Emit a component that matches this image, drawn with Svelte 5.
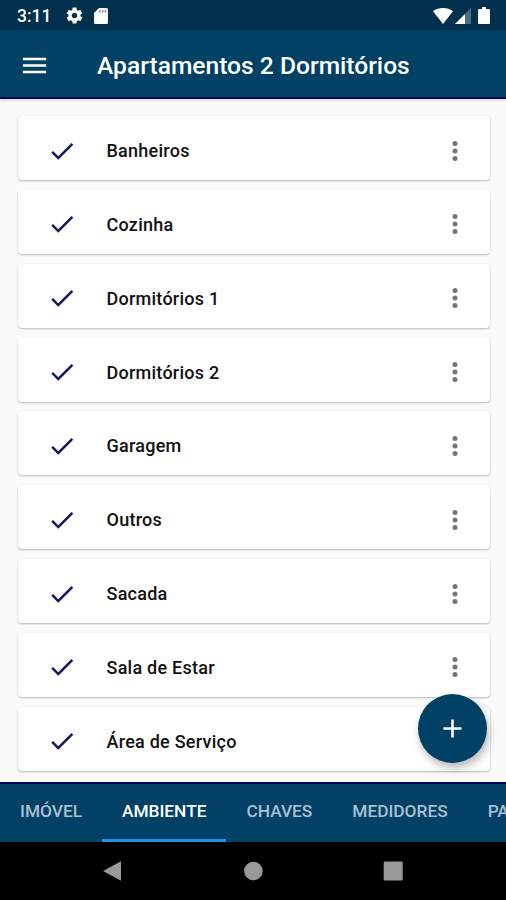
<script>
  let rooms = [
    "Banheiros",
    "Cozinha",
    "Dormitórios 1",
    "Dormitórios 2",
    "Garagem",
    "Outros",
    "Sacada",
    "Sala de Estar",
    "Área de Serviço",
  ];

  let tabs = ["IMÓVEL", "AMBIENTE", "CHAVES", "MEDIDORES", "PA"];
  let activeTab = "AMBIENTE";
</script>

<div class="screen">
  <div class="status-bar">
    <span class="clock">3:11</span>
    <svg class="gear" viewBox="0 0 24 24">
      <path
        d="M19.43 12.98c.04-.32.07-.64.07-.98s-.03-.66-.07-.98l2.11-1.65c.19-.15.24-.42.12-.64l-2-3.46c-.12-.22-.39-.3-.61-.22l-2.49 1c-.52-.4-1.08-.73-1.69-.98l-.38-2.65C14.46 2.18 14.25 2 14 2h-4c-.25 0-.46.18-.49.42l-.38 2.65c-.61.25-1.17.59-1.69.98l-2.49-1c-.23-.09-.49 0-.61.22l-2 3.46c-.13.22-.07.49.12.64l2.11 1.65c-.04.32-.07.65-.07.98s.03.66.07.98l-2.11 1.65c-.19.15-.24.42-.12.64l2 3.46c.12.22.39.3.61.22l2.49-1c.52.4 1.08.73 1.69.98l.38 2.65c.03.24.24.42.49.42h4c.25 0 .46-.18.49-.42l.38-2.65c.61-.25 1.17-.59 1.69-.98l2.49 1c.23.09.49 0 .61-.22l2-3.46c.12-.22.07-.49-.12-.64l-2.11-1.65zM12 15.5c-1.93 0-3.5-1.57-3.5-3.5s1.57-3.5 3.5-3.5 3.5 1.57 3.5 3.5-1.57 3.5-3.5 3.5z"
      />
    </svg>
    <svg class="sd" viewBox="0 0 14 16">
      <path
        d="M5 0h7.5Q14 0 14 1.5v13q0 1.5-1.5 1.5h-11Q0 16 0 14.5V5z"
      />
      <path class="slots" d="M5.3 2h1.3v2.500H5.300zM8 2h1.300v2.500H8zM10.700 2H12v2.500h-1.300z" />
    </svg>
    <span class="spacer"></span>
    <svg class="wifi" viewBox="0 0 20 16">
      <path d="M10 16 0 3.200Q4.300 0 10 0t10 3.200z" />
    </svg>
    <svg class="signal" viewBox="0 0 16 16">
      <path class="dim" d="M16 0v16H0z" />
      <path d="M10 6v10H0z" />
    </svg>
    <svg class="battery" viewBox="0 0 12 17">
      <path
        d="M4 0h4v2h2.700Q12 2 12 3.300v12.400q0 1.300-1.300 1.300H1.300Q0 17 0 15.700V3.300Q0 2 1.300 2H4z"
      />
    </svg>
  </div>

  <header class="app-bar">
    <button class="icon-btn" aria-label="Menu">
      <svg viewBox="0 0 24 24">
        <path d="M3 18h18v-2H3v2zm0-5h18v-2H3v2zm0-7v2h18V6H3z" />
      </svg>
    </button>
    <h1>Apartamentos 2 Dormitórios</h1>
  </header>

  <main>
    {#each rooms as room}
      <div class="card">
        <svg class="check" viewBox="0 0 24 24">
          <path d="M9 16.170 4.830 12l-1.420 1.410L9 19 21 7l-1.410-1.410z" />
        </svg>
        <span class="name">{room}</span>
        <button class="icon-btn more" aria-label="Mais opções">
          <svg viewBox="0 0 24 24">
            <circle cx="12" cy="6" r="2" />
            <circle cx="12" cy="12" r="2" />
            <circle cx="12" cy="18" r="2" />
          </svg>
        </button>
      </div>
    {/each}

    <button class="fab" aria-label="Adicionar">
      <svg viewBox="0 0 24 24">
        <path d="M19 13h-6v6h-2v-6H5v-2h6V5h2v6h6v2z" />
      </svg>
    </button>
  </main>

  <nav class="tabs">
    {#each tabs as tab}
      <button
        class="tab"
        class:active={tab === activeTab}
        on:click={() => (activeTab = tab)}>{tab}</button
      >
    {/each}
  </nav>

  <div class="system-nav">
    <svg viewBox="0 0 20 20"><path d="M0 10 18 0.300v19.400z" /></svg>
    <svg viewBox="0 0 20 20"><circle cx="10.400" cy="10" r="9.300" /></svg>
    <svg viewBox="0 0 20 20">
      <rect x="0.700" y="0.500" width="19" height="19" rx="1.300" />
    </svg>
  </div>
</div>

<style>
  :global(body) {
    margin: 0;
    background: #000;
  }

  .screen {
    width: 506px;
    height: 900px;
    display: flex;
    flex-direction: column;
    overflow: hidden;
    background: #fafafa;
    font-family: Roboto, "Liberation Sans", sans-serif;
  }

  svg {
    display: block;
    flex: none;
    fill: currentColor;
  }

  button {
    border: none;
    background: none;
    padding: 0;
    color: inherit;
    font-family: inherit;
    cursor: pointer;
  }

  .status-bar {
    flex: none;
    height: 30px;
    box-sizing: border-box;
    padding: 1px 16px 0 17px;
    display: flex;
    align-items: center;
    background: #00304d;
    color: #fff;
  }

  .clock {
    width: 47.5px;
    font-size: 17.5px;
    font-weight: 500;
  }

  .gear {
    width: 19px;
    height: 19px;
  }

  .sd {
    width: 14px;
    height: 16px;
    margin-left: 10.5px;
  }

  .slots {
    fill: #00304d;
    opacity: 0.6;
  }

  .spacer {
    flex: 1;
  }

  .wifi {
    width: 20px;
    height: 16px;
  }

  .signal {
    width: 16px;
    height: 16px;
    margin-left: 2px;
  }

  .dim {
    opacity: 0.3;
  }

  .battery {
    width: 12px;
    height: 17px;
    margin-left: 7px;
  }

  .app-bar {
    flex: none;
    height: 69px;
    box-sizing: border-box;
    padding: 3px 0 0 19px;
    display: flex;
    align-items: center;
    gap: 47px;
    background: #004165;
    border-bottom: 2px solid #06085a;
    box-shadow: 0 1px 3px rgba(0, 0, 40, 0.2);
    color: #fff;
    z-index: 1;
  }

  .icon-btn svg {
    width: 31px;
    height: 31px;
  }

  h1 {
    margin: 0;
    padding-top: 1px;
    font-size: 24.6px;
    font-weight: 500;
    white-space: nowrap;
  }

  main {
    flex: 1;
    min-height: 0;
    position: relative;
    padding: 17px 16px 0 18px;
    display: flex;
    flex-direction: column;
    gap: 9.85px;
  }

  .card {
    flex: none;
    height: 64px;
    box-sizing: border-box;
    padding: 5px 20px 0 29px;
    display: flex;
    align-items: center;
    background: #fff;
    border-radius: 4px;
    box-shadow:
      0 1px 2px rgba(0, 0, 0, 0.26),
      0 0 1px rgba(0, 0, 0, 0.08);
  }

  .check {
    width: 30px;
    height: 30px;
    color: #12185e;
  }

  .name {
    flex: 1;
    margin-left: 29.5px;
    font-size: 18px;
    font-weight: 500;
    letter-spacing: 0.25px;
    color: #111;
  }

  .more {
    color: #757575;
  }

  .more svg {
    width: 30px;
    height: 30px;
  }

  .fab {
    position: absolute;
    right: 19px;
    bottom: 19px;
    width: 69px;
    height: 69px;
    border-radius: 50%;
    display: flex;
    align-items: center;
    justify-content: center;
    background: #004165;
    color: #fff;
    box-shadow: 2px 5px 9px rgba(0, 0, 0, 0.28);
  }

  .fab svg {
    width: 31px;
    height: 31px;
  }

  .tabs {
    flex: none;
    height: 60px;
    box-sizing: border-box;
    display: flex;
    overflow: hidden;
    background: #004165;
    border-top: 2px solid #06085a;
  }

  .tab {
    flex: none;
    padding: 0 20px 1px;
    border-bottom: 3px solid transparent;
    font-size: 17.3px;
    font-weight: 500;
    color: #a9bfd2;
  }

  .tab.active {
    border-bottom-color: #2491e8;
    color: #fff;
  }

  .system-nav {
    flex: none;
    height: 58px;
    padding: 0 103px;
    display: flex;
    align-items: center;
    justify-content: space-between;
    background: #000;
    color: #999;
  }

  .system-nav svg {
    width: 20px;
    height: 20px;
  }
</style>
